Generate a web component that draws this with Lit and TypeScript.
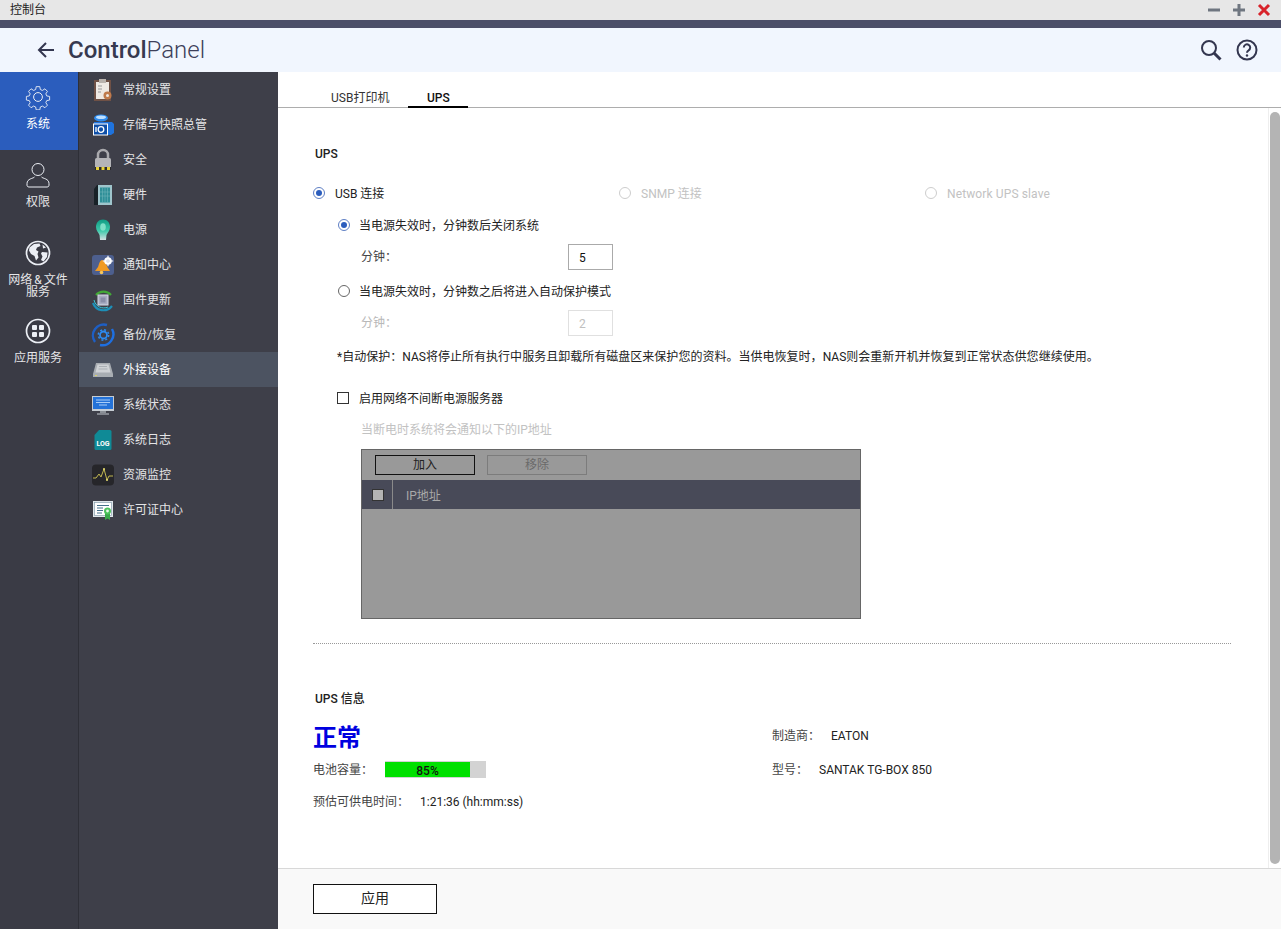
import { LitElement, html, css, svg } from "lit";
import { customElement } from "lit/decorators.js";

const railItems = [
  { label: "系统", active: true, icon: svg`<circle cx="13" cy="13" r="4.4"/><path d="M11 1.500h4l.6 3.200 2.300 1 2.800-1.800 2.800 2.800-1.800 2.800 1 2.300 3.200.6v4l-3.200.6-1 2.300 1.800 2.800-2.800 2.800-2.800-1.800-2.300 1-.6 3.200h-4l-.6-3.200-2.300-1-2.800 1.800-2.800-2.800 1.800-2.800-1-2.300-3.200-.6v-4l3.200-.6 1-2.300-1.800-2.800 2.800-2.800 2.800 1.800 2.300-1z" transform="translate(1.300 1.300) scale(.9)"/>` },
  { label: "权限", icon: svg`<circle cx="13" cy="7.500" r="6"/><path d="M9.500 15c-1 1.500-7.500 1.500-7.500 6.500V23c0 1 .5 2 2 2h18c1.500 0 2-1 2-2v-1.500c0-5-6.500-5-7.500-6.500"/>` },
  { label: "网络 & 文件 服务", icon: svg`<circle class="ring" cx="13" cy="13" r="11.500"/><path class="solid" d="M4.500 7.500l4.500-3.500 5.500-.5 1 2.500-3.500 1.500-1 2.500 2.500 1.500-1 2.500 1 3.500-2.500 3-1.500-4.500-3.500-2-2-3.500zM17 12l5.500.5-.5 4.500-3.500 4.500-2.500-1.500 1.500-3.500-1.500-3zM17.500 4.500l3.500 3-3 1z"/>` },
  { label: "应用服务", icon: svg`<circle class="ring" cx="13" cy="13" r="11.500"/><rect class="solid" x="7" y="7" width="5" height="5" rx="1"/><rect class="solid" x="14" y="7" width="5" height="5" rx="1"/><rect class="solid" x="7" y="14" width="5" height="5" rx="1"/><rect class="solid" x="14" y="14" width="5" height="5" rx="1"/>` },
];

const menuItems = [
  { label: "常规设置", icon: svg`<rect x="3" y="2" width="17" height="21" fill="#6f5146"/><rect x="5" y="4" width="13" height="17" fill="#efe9e4"/><rect x="8" y="1" width="7" height="4" fill="#b9b2ad"/><path d="M7 8h4M7 11h4M7 14h3" stroke="#9a9a9a" stroke-width="1.200"/><circle cx="16.500" cy="17.500" r="4" fill="#c07a4c"/><circle cx="16.500" cy="17.500" r="1.500" fill="#efe9e4"/>` },
  { label: "存储与快照总管", icon: svg`<ellipse cx="10" cy="5" rx="7" ry="3.500" fill="#2f8df0"/><ellipse cx="10" cy="4.200" rx="5" ry="1.800" fill="#bfe0ff"/><path d="M3 9h18l2 2v9l-3 2H3z" fill="#1f73dd"/><rect x="2.500" y="11" width="14" height="11" fill="#0e4fa8" stroke="#fff" stroke-width="1"/><circle cx="10" cy="16.500" r="2.800" fill="none" stroke="#fff" stroke-width="1.300"/><path d="M5 14v5" stroke="#fff" stroke-width="1.300"/>` },
  { label: "安全", icon: svg`<path d="M7 11V7a5 5 0 0 1 10 0v4" fill="none" stroke="#a9a9ad" stroke-width="2.500"/><rect x="4" y="10" width="16" height="11" rx="1.500" fill="#b4b4b8"/><path d="M4 19h16v3H4z" fill="#2a2a2c"/><path d="M5 19h3v3H5zM10.500 19h3v3h-3zM16 19h3v3h-3z" fill="#e8d23a"/>` },
  { label: "硬件", icon: svg`<path d="M3 6l3-4h2v20H3z" fill="#182127"/><path d="M7 2h14v20H7z" fill="#9fc5cc"/><rect x="9" y="4.500" width="10" height="15" fill="#2f8f98"/><path d="M11.500 4.500v15M14 4.500v15M16.500 4.500v15M9 9h10M9 13h10" stroke="#6db4ba" stroke-width=".6"/>` },
  { label: "电源", icon: svg`<defs><linearGradient id="bulb" x1="0" y1="0" x2="0" y2="1"><stop offset="0" stop-color="#0f9c84"/><stop offset=".55" stop-color="#3fc8aa"/><stop offset="1" stop-color="#d5dfe2"/></linearGradient></defs><path d="M12 1.500c4.500 0 7 3.500 7 7.500 0 3.500-2.500 5.500-3.500 8l-.5 5H9l-.5-5C7.500 14.500 5 12.500 5 9c0-4 2.500-7.500 7-7.500z" fill="url(#bulb)"/><ellipse cx="12" cy="9" rx="2.800" ry="3.800" fill="#7fe0c8"/>` },
  { label: "通知中心", icon: svg`<rect x="1" y="2" width="22" height="20" rx="3" fill="#4d5f8e"/><path d="M11 7c-3 1-3 5-4 7l-3 4h15l-2-3c-2-2-1-7-6-8z" fill="#f09a22"/><circle cx="10.500" cy="19.500" r="1.800" fill="#f7c65a"/><circle cx="17" cy="8" r="3.800" fill="#fff"/><circle cx="17" cy="8" r="1.500" fill="#4d5f8e"/><path d="M17 2.800v10.400M11.800 8h10.400" stroke="#fff" stroke-width="1.200"/>` },
  { label: "固件更新", icon: svg`<path d="M5 7a10 10 0 0 1 15 0" fill="none" stroke="#43a838" stroke-width="2.200"/><path d="M2 15a11 11 0 0 0 19 3" fill="none" stroke="#1d8fb8" stroke-width="2.200"/><path d="M3 12a10 10 0 0 0 14 7" fill="none" stroke="#39c3d6" stroke-width="1"/><rect x="7" y="7" width="10" height="10" fill="#a9adc2" stroke="#d8dae6" stroke-width="1"/><rect x="9.500" y="9.500" width="5" height="5" fill="#8a8ea8"/>` },
  { label: "备份/恢复", icon: svg`<path d="M4 19A11 11 0 0 1 16 2" fill="none" stroke="#1e5fc4" stroke-width="2.400"/><path d="M21 6a11 11 0 0 1-12 16" fill="none" stroke="#1e6fe0" stroke-width="2.400"/><circle cx="12.500" cy="12" r="3.500" fill="none" stroke="#2c8cf2" stroke-width="1.800"/><circle cx="12.500" cy="12" r="5.200" fill="none" stroke="#2c8cf2" stroke-width="1.500" stroke-dasharray="2 2.080"/>` },
  { label: "外接设备", icon: svg`<path d="M5 5h14l3 11v3H2v-3z" fill="#a8adb2"/><path d="M6.500 6.500h11l2 8h-15z" fill="#cfd2d5"/><path d="M8 8.500h8M7.500 11h9" stroke="#9aa0a6" stroke-width=".7"/><path d="M4 17.500h2" stroke="#d8d06a" stroke-width="1"/>` },
  { label: "系统状态", icon: svg`<rect x="1" y="3" width="22" height="15" fill="#c6ccd2"/><rect x="2" y="4" width="20" height="12" fill="#2472d8"/><path d="M5 7h14M5 9.500h14M8 12h8" stroke="#a8cdf8" stroke-width="1"/><path d="M9 18h6v2H9z" fill="#8b9097"/><path d="M6 20.500h12v1H6z" fill="#c6ccd2"/>` },
  { label: "系统日志", icon: svg`<path d="M8 2h11a1.500 1.500 0 0 1 1.500 1.500v17a1.500 1.500 0 0 1-1.500 1.500H5a1.500 1.500 0 0 1-1.500-1.500V7z" fill="#0f8a96"/><text x="12" y="18" font-size="7" font-weight="700" fill="#fff" text-anchor="middle" font-family="Roboto, sans-serif">LOG</text>` },
  { label: "资源监控", icon: svg`<rect x="1" y="1.500" width="22" height="21" rx="4" fill="#26262a"/><path d="M2 15h3l3-4 2 3 3-8 3 11 2-4h4" fill="none" stroke="#c2b851" stroke-width="1"/><circle cx="13" cy="6" r="1" fill="#e8df70"/><circle cx="16" cy="17" r="1" fill="#e8df70"/>` },
  { label: "许可证中心", icon: svg`<rect x="2" y="3" width="20" height="16" fill="#dfe6ea"/><rect x="3.500" y="4.500" width="17" height="13" fill="#fff" stroke="#8aa0ae" stroke-width=".7"/><path d="M6 7.500h12M6 10h6M6 12.500h6M6 15h5" stroke="#44708a" stroke-width="1.100"/><path d="M14 15v7l2.500-1.500L19 22v-7z" fill="#3aa84a"/><circle cx="16.500" cy="13" r="3.500" fill="#4cc25c"/><circle cx="16.500" cy="13" r="1.400" fill="#eaf8ec"/>` },
];

@customElement("app-root")
export class AppRoot extends LitElement {
  static styles = css`
    :host {
      display: block;
      width: 1281px;
      height: 929px;
      overflow: hidden;
      background: #fff;
      color: #222;
      font: 12px/20px Roboto, "Noto Sans CJK SC", sans-serif;
    }
    .window { display: flex; flex-direction: column; height: 929px; }

    .titlebar {
      display: flex; align-items: center; justify-content: space-between;
      height: 20px; flex: none; padding: 0 10px;
      background: #e7e7e7;
    }
    .winbtns { display: flex; gap: 11px; }
    .winbtns svg { display: block; width: 14px; height: 14px; }
    .strip { height: 8px; flex: none; background: #4b4e68; }

    .header {
      display: flex; align-items: center; height: 44px; flex: none;
      padding: 0 23px 0 36px; background: #f1f6fe; color: #33364f;
    }
    .back { width: 20px; height: 20px; margin-right: 12px; }
    .brand { flex: 1; font-size: 24px; line-height: 44px; font-weight: 300; color: #3d405a; }
    .brand b { font-weight: 500; color: #363950; }
    .tools { display: flex; gap: 14px; align-items: center; }
    .tools svg { display: block; width: 22px; height: 22px; }

    .body { flex: 1; display: flex; min-height: 0; }

    .rail { width: 78px; flex: none; background: #3a3b45; border-right: 1px solid #2e2f37; }
    .rail-item {
      display: flex; flex-direction: column; align-items: center;
      height: 78px; padding: 12px 2px 0 0; box-sizing: border-box;
      color: #e6e6e8; text-align: center;
    }
    .rail-item.active { background: #2b5dbd; color: #fff; }
    .rail-item svg {
      width: 26px; height: 26px; flex: none;
      fill: none; stroke: #eceff5; stroke-width: 1;
    }
    .rail-item svg .solid { fill: #eceff5; stroke: none; }
    .rail-item svg .ring { stroke-width: 1.700; }
    .rail-item span { margin-top: 8px; line-height: 12px; width: 62px; word-spacing: -1px; }

    .menu { width: 199px; flex: none; background: #3e3f49; }
    .menu-item {
      display: flex; align-items: center; height: 35px;
      padding-left: 12px; color: #e4e4e6;
    }
    .menu-item.active { background: #4c5361; color: #fff; }
    .menu-item svg { width: 24px; height: 24px; margin-right: 8px; flex: none; }

    .main { flex: 1; display: flex; flex-direction: column; min-width: 0; }
    .tabs {
      display: flex; align-items: flex-end; height: 36px; flex: none;
      padding-left: 36px; box-sizing: border-box;
      border-bottom: 1px solid #adadad;
    }
    .tab {
      height: 19px; padding: 0 19px 0 17px; line-height: 20px; color: #333;
      box-sizing: border-box;
    }
    .tab.active {
      width: 60px; height: 20px; padding: 0; text-align: center;
      font-weight: 500; color: #111;
      border-bottom: 2px solid #000; margin-bottom: -1px;
    }

    .scroll { flex: 1; display: flex; min-height: 0; }
    .content { flex: 1; padding: 36px 37px 0 35px; min-width: 0; }
    .track { width: 12px; flex: none; border-left: 1px solid #eee; padding: 4px 0; }
    .thumb { width: 10px; height: 752px; margin-left: 1px; border-radius: 5px; background: #b4b4b4; }

    .row { display: flex; align-items: flex-start; min-height: 20px; }
    .heading { font-weight: 500; color: #222; padding-left: 2px; }
    .conn { display: grid; grid-template-columns: repeat(3, 306px); margin-top: 20px; }
    .choice { display: flex; align-items: flex-start; gap: 10px; }
    .choice.off { color: #c2c2c2; }
    .slave { letter-spacing: .12px; }
    .radio {
      width: 10px; height: 10px; flex: none; margin-top: 3px; border: 1px solid #666;
      border-radius: 50%; background: #fff; position: relative;
    }
    .radio.on { border-color: #5f7fc4; }
    .radio.on::after {
      content: ""; position: absolute; inset: 2px;
      border-radius: 50%; background: #2b5dbd;
    }
    .radio.off { border-color: #cdcdcd; }
    .sub { padding-left: 25px; }
    .sub .choice { gap: 9px; }
    .mt12 { margin-top: 12px; }
    .field { display: flex; align-items: center; margin-top: 8px; padding-left: 48px; }
    .field label { width: 207px; color: #444; }
    .field.off label { color: #b8b8b8; }
    .input {
      width: 45px; height: 26px; box-sizing: border-box; padding-left: 10px;
      border: 1px solid #aaa; line-height: 26px; color: #111;
    }
    .field.off .input { border-color: #e0e0e0; color: #c0c0c0; }
    .note { margin-top: 11px; padding-left: 24px; color: #222; white-space: nowrap; letter-spacing: .02px; }
    .check { margin-top: 22px; padding-left: 24px; gap: 10px; }
    .box { width: 10px; height: 10px; flex: none; margin-top: 3px; border: 1px solid #333; background: #fff; }
    .hint { margin-top: 11px; padding-left: 48px; color: #c2c2c2; }

    .table {
      width: 500px; height: 170px; box-sizing: border-box; margin: 9px 0 0 48px;
      background: #999; border: 1px solid #666;
    }
    .toolbar { display: flex; gap: 12px; height: 30px; align-items: center; padding: 0 0 0 13px; box-sizing: border-box; }
    .btn {
      width: 100px; height: 20px; box-sizing: border-box; text-align: center;
      line-height: 18px; border: 1px solid #111; color: #222;
    }
    .btn.off { border-color: #7c7c7c; color: #6a6a6a; }
    .thead {
      display: flex; align-items: center; height: 29px;
      background: #484a58; color: #a9a9a9;
    }
    .cellbox { width: 31px; height: 29px; display: flex; align-items: center; padding-left: 10px; box-sizing: border-box; border-right: 1px solid #8a8a8a; }
    .cellbox i { display: block; width: 10px; height: 10px; border: 1px solid #333; background: #b4b4b4; }
    .thead span { padding-left: 13px; margin-top: 2px; }

    .sep { margin-top: 24px; border-top: 1px dotted #999; }
    .info-title { margin-top: 45px; }
    .info { display: grid; grid-template-columns: 459px 1fr; }
    .status { margin-top: 13px; height: 32px; font-size: 24px; line-height: 32px; font-weight: 700; color: #0000e0; }
    .battery { margin-top: 7px; display: flex; align-items: center; height: 17px; color: #444; }
    .battery label { width: 72px; }
    .bar { width: 101px; height: 17px; background: #d3d3d3; position: relative; }
    .level { height: 15px; margin-top: 1px; background: #00e000; }
    .bar span {
      position: absolute; left: 0; top: 2px; width: 85px; text-align: center;
      line-height: 17px; font-weight: 500; color: #111;
    }
    .time { margin-top: 14px; color: #444; display: flex; }
    .time label { width: 107px; }
    .time span { color: #222; }
    .spec { display: flex; color: #444; }
    .spec span { color: #222; }
    .maker { margin-top: 17px; }
    .maker label { width: 59px; }
    .model { margin-top: 14px; }
    .model label { width: 47px; }

    .footer {
      height: 61px; flex: none; box-sizing: border-box; padding: 15px 0 0 35px;
      background: #f9f9f9; border-top: 1px solid #d8d8d8;
    }
    .apply {
      width: 124px; height: 30px; box-sizing: border-box; text-align: center;
      border: 1px solid #111; background: #fff; font-size: 14px; line-height: 26px; color: #222;
    }
  `;

  render() {
    return html`
      <div class="window">
        <div class="titlebar">
          <span>控制台</span>
          <div class="winbtns">
            <svg viewBox="0 0 14 14"><path d="M1 7h12" stroke="#6f7680" stroke-width="3"/></svg>
            <svg viewBox="0 0 14 14"><path d="M1 7h12M7 1v12" stroke="#6f7680" stroke-width="3"/></svg>
            <svg viewBox="0 0 14 14"><path d="M2 2l10 10M12 2L2 12" stroke="#d8232a" stroke-width="3"/></svg>
          </div>
        </div>
        <div class="strip"></div>
        <div class="header">
          <svg class="back" viewBox="0 0 20 20" fill="none" stroke="#33364f" stroke-width="2">
            <path d="M18 10H3M10 3l-7 7 7 7"/>
          </svg>
          <div class="brand"><b>Control</b>Panel</div>
          <div class="tools">
            <svg viewBox="0 0 22 22" fill="none" stroke="#33364f" stroke-width="2">
              <circle cx="9" cy="9" r="7"/><path d="M14 14l6.500 6.500" stroke-width="3"/>
            </svg>
            <svg viewBox="0 0 22 22" fill="none" stroke="#33364f" stroke-width="2">
              <circle cx="11" cy="11" r="9.500"/>
              <path d="M7.800 8.500a3.200 3.200 0 1 1 4.800 2.800c-1 .6-1.600 1.200-1.600 2.400"/>
              <circle cx="11" cy="16.500" r="1.200" fill="#33364f" stroke="none"/>
            </svg>
          </div>
        </div>
        <div class="body">
          <nav class="rail">
            ${railItems.map(
              (r) => html`
                <div class="rail-item ${r.active ? "active" : ""}">
                  <svg viewBox="0 0 26 26">${r.icon}</svg>
                  <span>${r.label}</span>
                </div>
              `
            )}
          </nav>
          <nav class="menu">
            ${menuItems.map(
              (m) => html`
                <div class="menu-item ${m.label === "外接设备" ? "active" : ""}">
                  <svg viewBox="0 0 24 24">${m.icon}</svg>
                  <span>${m.label}</span>
                </div>
              `
            )}
          </nav>
          <div class="main">
            <div class="tabs">
              <div class="tab">USB打印机</div>
              <div class="tab active">UPS</div>
            </div>
            <div class="scroll">
              <div class="content">
                <div class="row heading">UPS</div>
                <div class="conn">
                  <div class="choice"><i class="radio on"></i>USB 连接</div>
                  <div class="choice off"><i class="radio off"></i>SNMP 连接</div>
                  <div class="choice off slave"><i class="radio off"></i>Network UPS slave</div>
                </div>
                <div class="sub row mt12">
                  <div class="choice"><i class="radio on"></i>当电源失效时，分钟数后关闭系统</div>
                </div>
                <div class="field"><label>分钟：</label><div class="input">5</div></div>
                <div class="sub row mt12">
                  <div class="choice"><i class="radio"></i>当电源失效时，分钟数之后将进入自动保护模式</div>
                </div>
                <div class="field off"><label>分钟：</label><div class="input">2</div></div>
                <div class="note">*自动保护：NAS将停止所有执行中服务且卸载所有磁盘区来保护您的资料。当供电恢复时，NAS则会重新开机并恢复到正常状态供您继续使用。</div>
                <div class="row check"><i class="box"></i>启用网络不间断电源服务器</div>
                <div class="hint">当断电时系统将会通知以下的IP地址</div>
                <div class="table">
                  <div class="toolbar">
                    <div class="btn">加入</div>
                    <div class="btn off">移除</div>
                  </div>
                  <div class="thead">
                    <div class="cellbox"><i></i></div>
                    <span>IP地址</span>
                  </div>
                </div>
                <div class="sep"></div>
                <div class="row heading info-title">UPS 信息</div>
                <div class="info">
                  <div>
                    <div class="status">正常</div>
                    <div class="battery">
                      <label>电池容量：</label>
                      <div class="bar"><div class="level" style="width: 85px"></div><span>85%</span></div>
                    </div>
                    <div class="time"><label>预估可供电时间：</label><span>1:21:36 (hh:mm:ss)</span></div>
                  </div>
                  <div>
                    <div class="spec maker"><label>制造商：</label><span>EATON</span></div>
                    <div class="spec model"><label>型号：</label><span>SANTAK TG-BOX 850</span></div>
                  </div>
                </div>
              </div>
              <div class="track"><div class="thumb"></div></div>
            </div>
            <div class="footer"><div class="apply">应用</div></div>
          </div>
        </div>
      </div>
    `;
  }
}
